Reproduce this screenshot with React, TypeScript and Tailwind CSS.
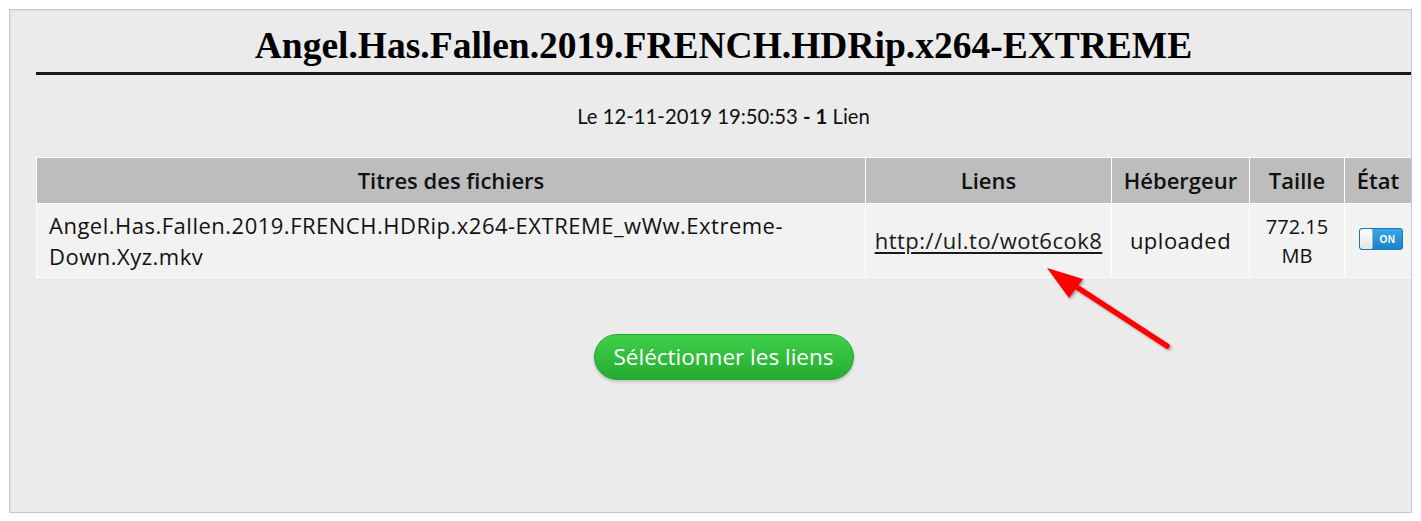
const LATO = "font-['Lato','Open_Sans',sans-serif]";
const OPEN = "font-['Open_Sans','Lato',sans-serif]";

function Toggle() {
  return (
    <div className="inline-flex h-[22px] w-[44px] overflow-hidden rounded-[3px] border border-[#1b78b8] bg-gradient-to-b from-[#3aa6ea] to-[#1a82c8]">
      <div className="h-full w-[13px] rounded-[2px] border-r border-[#9bb] bg-gradient-to-b from-white to-[#e4e4e4]" />
      <div className="flex flex-1 items-center justify-center text-[10px] font-bold text-white font-['Liberation_Sans',sans-serif]">
        ON
      </div>
    </div>
  );
}

function Arrow() {
  return (
    <svg
      className="pointer-events-none absolute left-[1040px] top-[260px]"
      width="140"
      height="100"
      viewBox="1040 260 140 100"
    >
      <defs>
        <filter id="sh" x="-20%" y="-20%" width="140%" height="140%">
          <feDropShadow dx="1.5" dy="1.5" stdDeviation="1.2" floodColor="#000" floodOpacity="0.35" />
        </filter>
      </defs>
      <g filter="url(#sh)">
        <line x1="1167" y1="346" x2="1072" y2="284" stroke="#ff0000" strokeWidth="5.5" strokeLinecap="round" />
        <polygon points="1047,268 1083,279 1069,298" fill="#ff0000" />
      </g>
    </svg>
  );
}

export default function App() {
  return (
    <div className="relative min-h-[521px] bg-white pl-[9px] pr-[9px] pt-[9px]">
      <div className="h-[504px] border border-[#c9c9c9] bg-[#ebebeb] pl-[26px] shadow-[inset_1px_1px_2px_rgba(0,0,0,0.06)]">
        <h1 className="mt-[14px] border-b-[3px] border-[#1a1a1a] pb-[5px] text-center text-[37.5px] font-bold leading-[43px] text-black font-['Liberation_Serif',serif]">
          Angel.Has.Fallen.2019.FRENCH.HDRip.x264-EXTREME
        </h1>
        <p className={`mt-[26px] text-center text-[20.3px] leading-[30px] text-[#111] ${LATO}`}>
          Le 12-11-2019 19:50:53 <b>- 1</b> Lien
        </p>
        <table className={`mt-[26px] w-full border-collapse text-[22px] tracking-[0.5px] text-[#111] ${OPEN}`}>
          <thead>
            <tr className="h-[46px] bg-[#bdbdbd] tracking-normal">
              <th className="w-[829px] border border-white font-semibold">Titres des fichiers</th>
              <th className="w-[246px] border border-white font-semibold">Liens</th>
              <th className="w-[138px] border border-white font-semibold">Hébergeur</th>
              <th className="w-[95px] border border-white font-semibold">Taille</th>
              <th className="border border-white border-r-0 font-semibold">État</th>
            </tr>
          </thead>
          <tbody>
            <tr className="h-[74px] bg-[#f2f2f2]">
              <td className="border border-white px-[12px] text-left leading-[31px]">
                Angel.Has.Fallen.2019.FRENCH.HDRip.x264-EXTREME_wWw.Extreme-Down.Xyz.mkv
              </td>
              <td className="border border-white text-center">
                <a href="#" className="text-[#1a1a1a] underline underline-offset-[3px]">
                  http://ul.to/wot6cok8
                </a>
              </td>
              <td className="border border-white text-center">uploaded</td>
              <td className="border border-white text-center text-[20px] leading-[29px] tracking-normal">
                772.15
                <br />
                MB
              </td>
              <td className="border border-white border-r-0 pl-[14px] align-middle">
                <Toggle />
              </td>
            </tr>
          </tbody>
        </table>
        <div className="mt-[56px] flex justify-center">
          <button
            className={`h-[46px] w-[260px] rounded-full border border-[#27a030] bg-gradient-to-b from-[#3fd04a] to-[#25ab31] text-[22.5px] text-white shadow-[0_2px_3px_rgba(0,0,0,0.18)] ${OPEN}`}
          >
            Séléctionner les liens
          </button>
        </div>
      </div>
      <Arrow />
    </div>
  );
}
